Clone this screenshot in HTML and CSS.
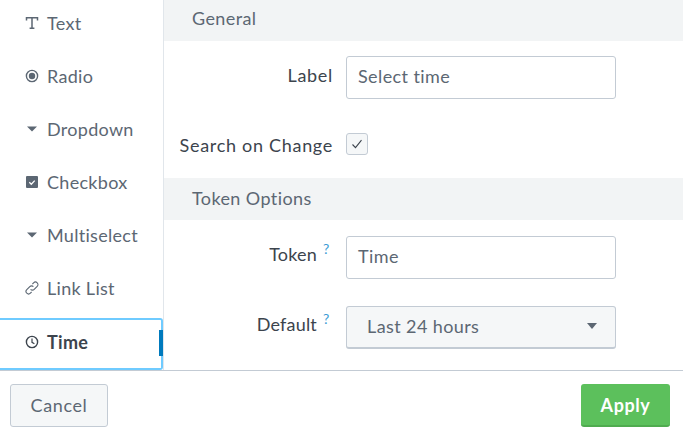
FILE: index.html
```html
<!DOCTYPE html>
<html lang="en">
<head>
<meta charset="utf-8">
<title>Time input</title>
<link rel="stylesheet" href="styles.css">
</head>
<body>
<div class="app">
  <div class="main">
    <nav class="side">
      <div class="item"><span class="ic"><svg width="14" height="14" viewBox="0 0 14 14"><path d="M1.5 4.5V1.7h11v2.8M7 1.7v10.6M4.6 12.3h4.8" fill="none" stroke="#5c6773" stroke-width="1.5"/></svg></span>Text</div>
      <div class="item"><span class="ic"><svg width="14" height="14" viewBox="0 0 14 14"><circle cx="7" cy="7" r="5.6" fill="none" stroke="#5c6773" stroke-width="1.4"/><circle cx="7" cy="7" r="3.2" fill="#5c6773"/></svg></span>Radio</div>
      <div class="item"><span class="ic"><svg width="14" height="14" viewBox="0 0 14 14"><path d="M2 4.5h10L7 9.5z" fill="#5c6773"/></svg></span>Dropdown</div>
      <div class="item"><span class="ic"><svg width="14" height="14" viewBox="0 0 14 14"><rect x="1" y="1" width="12" height="12" rx="1" fill="#5c6773"/><path d="M4.3 7.2l2 2 3.4-3.6" fill="none" stroke="#fff" stroke-width="1.3"/></svg></span>Checkbox</div>
      <div class="item"><span class="ic"><svg width="14" height="14" viewBox="0 0 14 14"><path d="M2 4.5h10L7 9.5z" fill="#5c6773"/></svg></span>Multiselect</div>
      <div class="item"><span class="ic"><svg width="14" height="14" viewBox="0 0 14 14"><path d="M5.6 8.4a2.5 2.5 0 0 0 3.6 0l3-3a2.5 2.5 0 0 0-3.6-3.6L7.4 3M8.4 5.6a2.5 2.5 0 0 0-3.6 0l-3 3a2.5 2.5 0 0 0 3.6 3.6L6.6 11" fill="none" stroke="#5c6773" stroke-width="1.1"/></svg></span>Link List</div>
      <div class="item active"><span class="ic"><svg width="14" height="14" viewBox="0 0 14 14"><circle cx="7" cy="7" r="5.6" fill="none" stroke="#3c444d" stroke-width="1.4"/><path d="M7 3.6V7.3l2.4 1.4" fill="none" stroke="#3c444d" stroke-width="1.2"/></svg></span>Time<span class="mark"></span></div>
    </nav>
    <section class="form">
      <h2 class="head">General</h2>
      <div class="rows first">
        <div class="row">
          <label class="lab">Label</label>
          <div class="input">Select time</div>
        </div>
        <div class="row check-row">
          <label class="lab">Search on Change</label>
          <span class="check"><svg width="14" height="14" viewBox="0 0 14 14"><path d="M2.5 7.5l3 3.2 6-7.5" fill="none" stroke="#3c444d" stroke-width="1.1"/></svg></span>
        </div>
      </div>
      <h2 class="head tall">Token Options</h2>
      <div class="rows second">
        <div class="row">
          <label class="lab with-help">Token<sup class="help">?</sup></label>
          <div class="input">Time</div>
        </div>
        <div class="row">
          <label class="lab with-help">Default<sup class="help">?</sup></label>
          <div class="select"><span>Last 24 hours</span><i class="caret"></i></div>
        </div>
      </div>
    </section>
  </div>
  <footer class="foot">
    <button class="btn cancel">Cancel</button>
    <button class="btn apply">Apply</button>
  </footer>
</div>
</body>
</html>
```
FILE: styles.css
```css
* { box-sizing: border-box; }
html, body { margin: 0; padding: 0; }
body { width: 683px; height: 440px; overflow: hidden; background: #fff; font-family: Lato, "Open Sans", sans-serif; font-size: 18px; color: #5c6773; }
.app { display: flex; flex-direction: column; height: 440px; }
.main { display: flex; height: 371px; border-bottom: 1px solid #c3cbd4; }
.side { width: 164px; flex: none; border-right: 1px solid #e1e6eb; display: flex; flex-direction: column; margin-top: -4px; letter-spacing: .3px; }
.item { height: 53px; flex: none; display: flex; align-items: center; padding-left: 25px; gap: 8px; position: relative; }
.ic { width: 14px; height: 14px; display: flex; }
.item.active { height: 52px; width: 163px; margin-top: 4px; padding-bottom: 4px; border: 2px solid #6fcbff; border-left: 0; border-radius: 0 3px 3px 0; color: #3c444d; font-weight: 700; }
.mark { position: absolute; right: -2px; top: 10px; width: 4px; height: 26px; background: #007abd; }
.form { flex: 1; min-width: 0; }
.head { margin: 0; height: 41px; background: #f2f4f5; font-size: 18px; font-weight: 400; letter-spacing: .4px; color: #5c6773; padding-left: 28px; line-height: 36px; }
.head.tall { height: 42px; line-height: 40px; }
.rows.first { height: 137px; padding-top: 15px; }
.rows.second { height: 149px; padding-top: 16px; }
.row { display: flex; align-items: flex-start; height: 43px; }
.rows.second .row + .row, .row.check-row { margin-top: 27px; }
.lab { width: 169px; flex: none; text-align: right; color: #3c444d; line-height: 38px; letter-spacing: .7px; }
.lab.with-help { line-height: 36px; letter-spacing: .2px; }
.input, .select { width: 270px; height: 43px; margin-left: 13px; border: 1px solid #c3cbd4; border-radius: 3px; padding: 0 11px; line-height: 39px; background: #fff; letter-spacing: .4px; }
.select { background: #f5f7f8; padding: 0 18px 2px 20px; display: flex; justify-content: space-between; align-items: center; border-bottom-width: 2px; }
.caret { width: 0; height: 0; border-left: 5px solid transparent; border-right: 5px solid transparent; border-top: 6px solid #5c6773; }
.check { width: 22px; height: 22px; margin-left: 13px; margin-top: 7px; border: 1px solid #c3cbd4; border-radius: 3px; background: #f5f7f8; display: flex; align-items: center; justify-content: center; }
.row.check-row { height: 34px; }
.help { display: inline-block; width: 16px; padding-left: 6px; text-align: left; font-size: 14px; line-height: 1; vertical-align: 7px; color: #3a9bd5; letter-spacing: 0; }
.foot { flex: 1; display: flex; justify-content: space-between; align-items: flex-start; padding: 13px 13px 0 10px; }
.btn { height: 43px; border-radius: 3px; font: inherit; letter-spacing: .6px; cursor: pointer; }
.cancel { width: 98px; background: #f5f7f8; border: 1px solid #c3cbd4; color: #5c6773; padding-bottom: 3px; }
.apply { width: 89px; background: #5cc05c; border: 0; border-bottom: 2px solid #4fab4f; color: #fff; font-weight: 700; }
```
